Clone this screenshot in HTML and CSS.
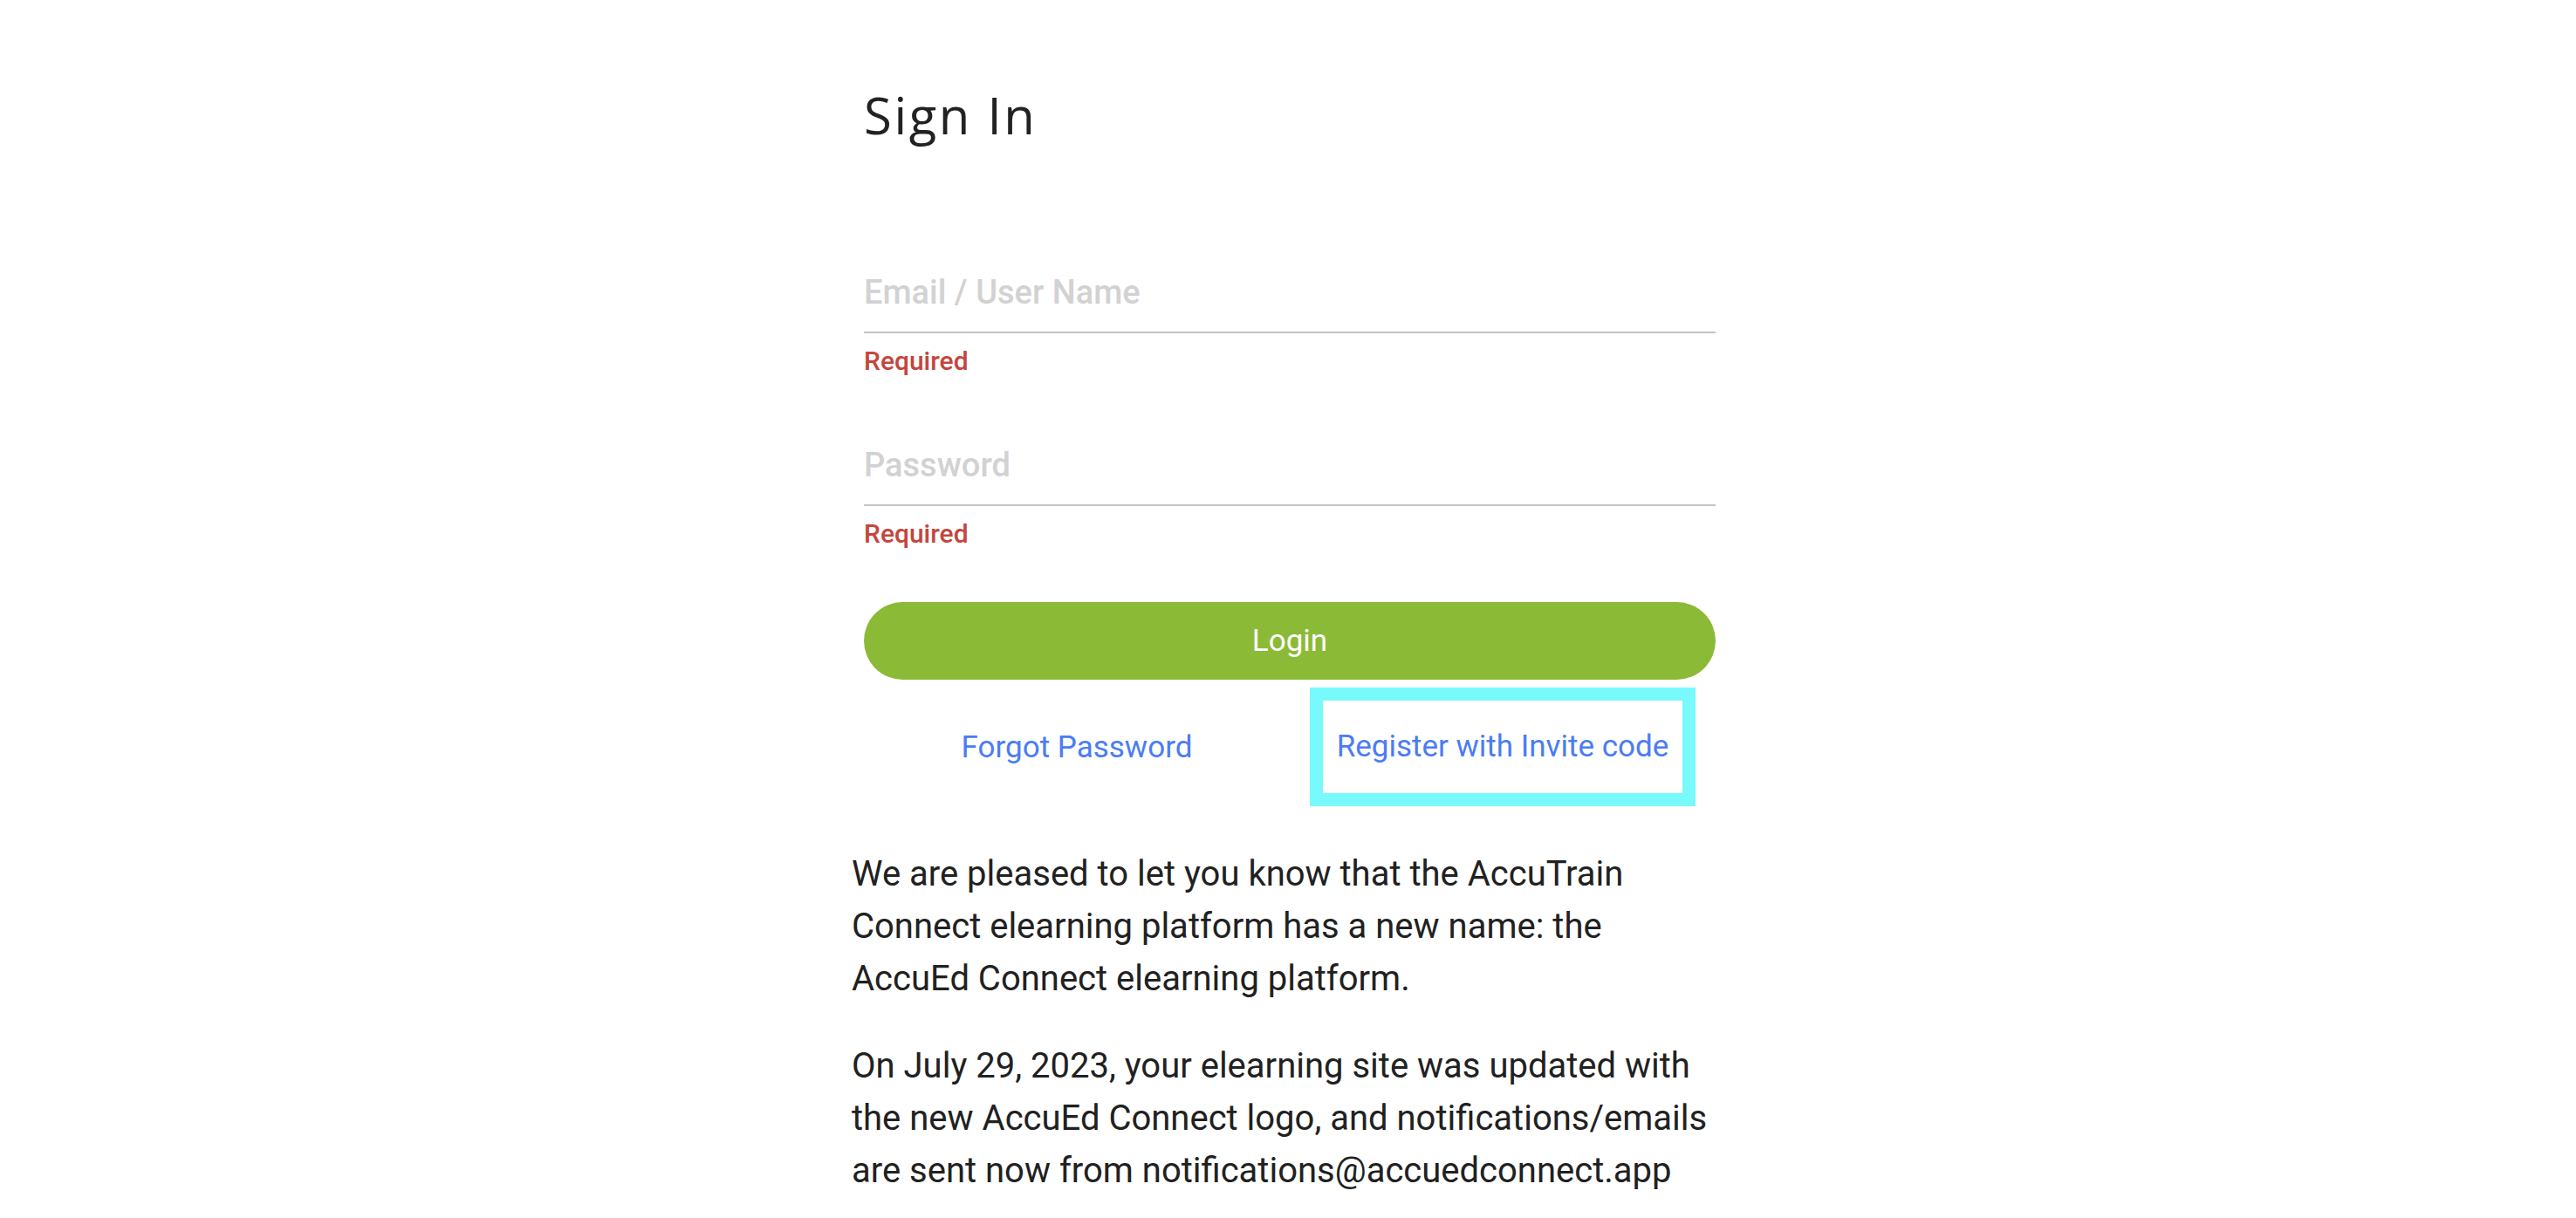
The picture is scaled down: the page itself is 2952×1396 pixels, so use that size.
FILE: index.html
```html
<!DOCTYPE html>
<html lang="en">
<head>
<meta charset="utf-8">
<title>Sign In</title>
<link rel="stylesheet" href="styles.css">
</head>
<body>
<main class="page">
  <form class="signin" onsubmit="return false;">
    <h1 class="title">Sign In</h1>
    <div class="field">
      <input class="field-input" type="text" placeholder="Email / User Name">
      <div class="field-error">Required</div>
    </div>
    <div class="field">
      <input class="field-input" type="password" placeholder="Password">
      <div class="field-error">Required</div>
    </div>
    <button class="login-btn" type="submit">Login</button>
    <div class="links">
      <div class="link-cell"><a class="link" href="#">Forgot Password</a></div>
      <div class="link-cell"><a class="link link-highlight" href="#">Register with Invite code</a></div>
    </div>
  </form>
  <section class="notice">
    <p>We are pleased to let you know that the AccuTrain Connect elearning platform has a new name: the AccuEd Connect elearning platform.</p>
    <p>On July 29, 2023, your elearning site was updated with the new AccuEd Connect logo, and notifications/emails are sent now from notifications@accuedconnect.app</p>
  </section>
</main>
</body>
</html>
```

FILE: styles.css
```css
html, body {
  margin: 0;
  padding: 0;
  background: #ffffff;
}

body {
  font-family: Roboto, "Liberation Sans", Arial, sans-serif;
  color: #212121;
}

.page {
  width: 1000px;
  margin: 0 auto;
  padding-top: 92px;
}

.signin {
  width: 976px;
  margin-left: 14px;
  display: flex;
  flex-direction: column;
}

.title {
  margin: 0 0 140px 0;
  font-family: "Open Sans", "Noto Sans", sans-serif;
  font-weight: 400;
  font-size: 58px;
  line-height: 80px;
  letter-spacing: 2.6px;
  color: #222222;
  height: 80px;
}

.field {
  display: flex;
  flex-direction: column;
  margin-bottom: 79px;
}

.field + .field {
  margin-bottom: 61px;
}

.field-input {
  display: block;
  width: 100%;
  box-sizing: border-box;
  border: none;
  border-bottom: 2px solid #c4c4c4;
  outline: none;
  padding: 0 0 22px 0;
  margin: 0;
  font-family: Roboto, "Liberation Sans", sans-serif;
  font-weight: 500;
  font-size: 38px;
  line-height: 46px;
  height: 70px;
  color: #333;
  background: transparent;
}

.field-input::placeholder {
  color: #d2d2d2;
  opacity: 1;
}

.field-error {
  margin-top: 15px;
  font-weight: 500;
  font-size: 30px;
  line-height: 34px;
  color: #c4463d;
}

.login-btn {
  display: block;
  width: 100%;
  height: 89px;
  border: none;
  border-radius: 45px;
  background: #8bba37;
  color: #ffffff;
  font-family: Roboto, "Liberation Sans", sans-serif;
  font-weight: 400;
  font-size: 35px;
  padding: 0;
  margin: 0;
  cursor: pointer;
}

.links {
  display: flex;
  align-items: center;
  margin-top: 9px;
}

.link-cell {
  flex: 1 1 0;
  display: flex;
  justify-content: center;
  align-items: center;
}

.link {
  font-size: 35px;
  color: #4a7cf5;
  text-decoration: none;
}

.link-highlight {
  display: inline-block;
  padding: 32px 16px 33px 16px;
  border: 15px solid #78f9fb;
}

.notice {
  margin-top: 48px;
}

.notice p {
  margin: 0 0 40px 0;
  font-size: 40px;
  line-height: 60px;
  color: #212121;
}
```
